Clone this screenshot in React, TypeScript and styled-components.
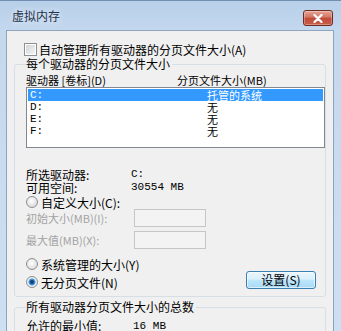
import styled, { createGlobalStyle } from "styled-components";

const GlobalStyle = createGlobalStyle`
  html, body {
    margin: 0;
    padding: 0;
  }
  body {
    font-family: "Noto Sans CJK SC", "Noto Sans", sans-serif;
    background: #c9dbef;
  }
`;

interface Drive {
  letter: string;
  size: string;
  selected?: boolean;
}

const drives: Drive[] = [
  { letter: "C:", size: "托管的系统", selected: true },
  { letter: "D:", size: "无" },
  { letter: "E:", size: "无" },
  { letter: "F:", size: "无" },
];

function CloseIcon(): React.ReactElement {
  return (
    <svg width="10" height="9" viewBox="0 0 10 9">
      <path d="M1.5 1 L8.5 8 M8.5 1 L1.5 8" stroke="#fff" strokeWidth="2.2" strokeLinecap="round" />
    </svg>
  );
}

export default function App(): React.ReactElement {
  return (
    <>
      <GlobalStyle />
      <Window>
        <TitleBar>
          <Title>虚拟内存</Title>
          <CloseButton type="button">
            <CloseIcon />
          </CloseButton>
        </TitleBar>
        <Client>
          <CheckRow>
            <Checkbox />
            <Label>自动管理所有驱动器的分页文件大小(A)</Label>
          </CheckRow>

          <GroupBox>
            <Legend>每个驱动器的分页文件大小</Legend>
            <HeaderRow>
              <span>驱动器 [卷标](D)</span>
              <span>分页文件大小(MB)</span>
            </HeaderRow>
            <ListBox>
              {drives.map((d) => (
                <DriveRow key={d.letter} $selected={d.selected}>
                  <Mono>{d.letter}</Mono>
                  <span>{d.size}</span>
                </DriveRow>
              ))}
            </ListBox>

            <InfoGrid>
              <span>所选驱动器:</span>
              <Mono>C:</Mono>
              <span>可用空间:</span>
              <Mono>30554 MB</Mono>
            </InfoGrid>

            <RadioRow $top={1}>
              <Radio />
              <Label>自定义大小(C):</Label>
            </RadioRow>
            <FieldGroup>
              <FieldRow>
                <span>初始大小(MB)(I):</span>
                <DisabledInput />
              </FieldRow>
              <FieldRow>
                <span>最大值(MB)(X):</span>
                <DisabledInput />
              </FieldRow>
            </FieldGroup>

            <RadioRow $top={8}>
              <Radio />
              <Label>系统管理的大小(Y)</Label>
            </RadioRow>
            <BottomRow>
              <RadioRow $top={0}>
                <Radio $checked />
                <Label>无分页文件(N)</Label>
              </RadioRow>
              <SetButton type="button">设置(S)</SetButton>
            </BottomRow>
          </GroupBox>

          <GroupBox $top={3} $padTop={5}>
            <Legend>所有驱动器分页文件大小的总数</Legend>
            <TotalRow>
              <span>允许的最小值:</span>
              <Mono>16 MB</Mono>
            </TotalRow>
          </GroupBox>
        </Client>
      </Window>
    </>
  );
}

const Window = styled.div`
  width: 341px;
  height: 331px;
  box-sizing: border-box;
  overflow: hidden;
  display: flex;
  flex-direction: column;
  padding: 0 7px 0 6px;
  border-top: 1px solid #7290b3;
  background: linear-gradient(180deg, #b7cfe9 0px, #c4d8ee 30px, #cddff2 100%);
`;

const TitleBar = styled.div`
  height: 29px;
  flex-shrink: 0;
  display: flex;
  justify-content: space-between;
  align-items: flex-start;
  padding-left: 6px;
`;

const Title = styled.span`
  margin-top: 8px;
  font-size: 12px;
  line-height: 14px;
  color: #23324a;
  text-shadow: 0 0 6px rgba(255, 255, 255, 0.9);
`;

const CloseButton = styled.button`
  margin: 9px 1px 0 0;
  width: 30px;
  height: 16px;
  padding: 0;
  display: flex;
  align-items: center;
  justify-content: center;
  border: 1px solid #6e2b22;
  border-radius: 3px;
  background: linear-gradient(180deg, #e7a597 0%, #d27462 45%, #c0493a 50%, #c95e49 100%);
  box-shadow: inset 0 0 0 1px rgba(255, 255, 255, 0.3);
`;

const Client = styled.div`
  flex: 1;
  display: flex;
  flex-direction: column;
  background: #f0f0f0;
  border: 1px solid #8ea3bc;
  border-bottom: none;
  color: #000;
`;

const CheckRow = styled.div`
  margin: 12px 0 0 17px;
  height: 13px;
  display: flex;
  align-items: center;
  gap: 2px;
`;

const Checkbox = styled.span`
  width: 13px;
  height: 13px;
  box-sizing: border-box;
  border: 1px solid #8e8f8f;
  background: linear-gradient(135deg, #cdd1d6, #f7f7f7);
  box-shadow: inset 0 0 0 1px #fff;
`;

const Label = styled.span`
  font-size: 12px;
  line-height: 13px;
  white-space: nowrap;
`;

const GroupBox = styled.fieldset<{ $top?: number; $padTop?: number }>`
  margin: ${(p) => p.$top ?? 1}px 7px 0;
  padding: ${(p) => p.$padTop ?? 2}px 0 7px 11px;
  min-width: 0;
  border: 1px solid #d5dfe5;
  border-radius: 3px;
  display: flex;
  flex-direction: column;
`;

const Legend = styled.legend`
  padding: 0 2px 0 0;
  font-size: 12px;
  line-height: 14px;
`;

const HeaderRow = styled.div`
  display: grid;
  grid-template-columns: 151px 1fr;
  height: 14px;
  font-size: 11px;
  line-height: 14px;
  white-space: nowrap;
`;

const ListBox = styled.div`
  height: 61px;
  box-sizing: border-box;
  padding: 1px;
  border: 1px solid #828790;
  background: #fff;
`;

const DriveRow = styled.div<{ $selected?: boolean }>`
  display: grid;
  grid-template-columns: 177px 1fr;
  height: 12px;
  padding-left: 2px;
  font-size: 11px;
  line-height: 12px;
  background: ${(p) => (p.$selected ? "#3399ff" : "transparent")};
  color: ${(p) => (p.$selected ? "#fff" : "#000")};
`;

const Mono = styled.span`
  font-family: "Liberation Mono", "Noto Sans CJK SC", monospace;
  font-size: 11px;
`;

const InfoGrid = styled.div`
  margin-top: 20px;
  display: grid;
  grid-template-columns: 105px 1fr;
  grid-auto-rows: 13px;
  font-size: 12px;
  line-height: 13px;
`;

const RadioRow = styled.div<{ $top: number }>`
  margin-top: ${(p) => p.$top}px;
  height: 14px;
  display: flex;
  align-items: center;
  gap: 3px;
`;

const Radio = styled.span<{ $checked?: boolean }>`
  width: 12px;
  height: 12px;
  box-sizing: border-box;
  border-radius: 50%;
  border: 1px solid #8e8f8f;
  background: ${(p) =>
    p.$checked
      ? "radial-gradient(circle, #0f4478 0 1.5px, #3d94dc 2.5px 3.2px, #e9eef2 3.8px)"
      : "radial-gradient(circle at 45% 40%, #ffffff 0, #dedede 70%)"};
`;

const FieldGroup = styled.div`
  display: flex;
  flex-direction: column;
  gap: 4px;
`;

const FieldRow = styled.div`
  display: grid;
  grid-template-columns: 108px 72px;
  align-items: center;
  height: 18px;
  font-size: 11px;
  color: #a3a3a3;
  white-space: nowrap;
`;

const DisabledInput = styled.span`
  height: 18px;
  box-sizing: border-box;
  border: 1px solid #c6c6c6;
  background: #f3f3f3;
`;

const BottomRow = styled.div`
  display: flex;
  justify-content: space-between;
  align-items: flex-end;
  height: 18px;
`;

const SetButton = styled.button`
  width: 70px;
  height: 18px;
  margin-right: 9px;
  padding: 0;
  font-family: "Noto Sans CJK SC", sans-serif;
  font-size: 12px;
  line-height: 14px;
  color: #000;
  border: 1px solid #3c7fb1;
  border-radius: 3px;
  background: linear-gradient(180deg, #eaf6fd 0%, #d9f0fc 45%, #bee6fd 50%, #a7d9f5 100%);
  box-shadow: inset 0 0 0 1px rgba(255, 255, 255, 0.6);
`;

const TotalRow = styled.div`
  display: grid;
  grid-template-columns: 107px 1fr;
  height: 14px;
  font-size: 12px;
  line-height: 14px;
`;
